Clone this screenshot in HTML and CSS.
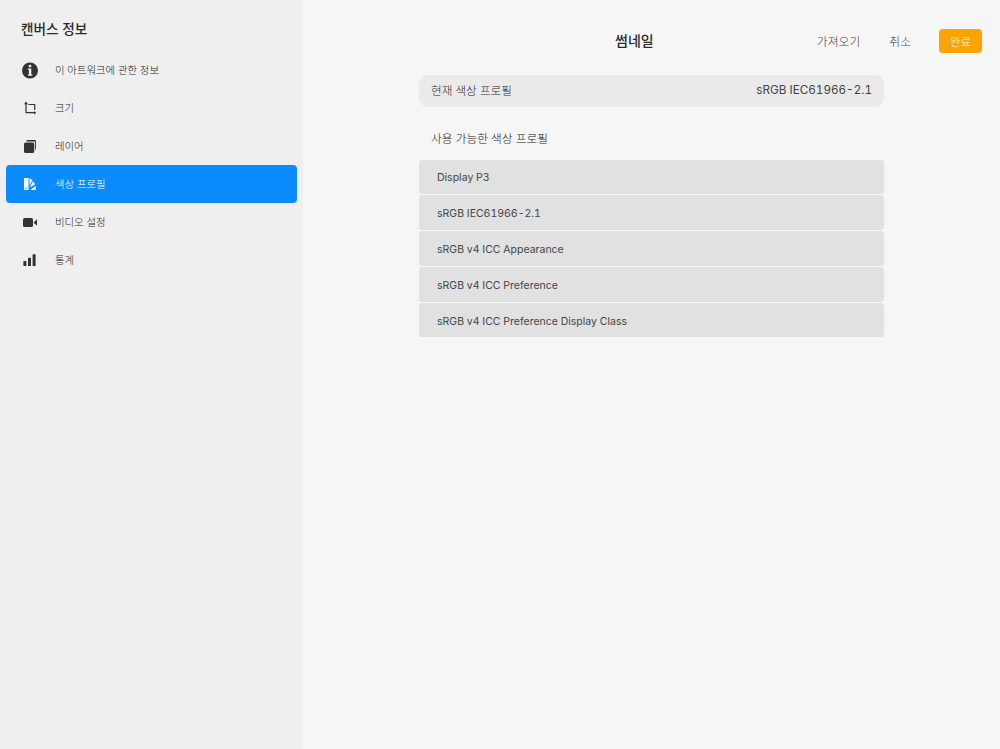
FILE: index.html
```html
<!DOCTYPE html>
<html lang="ko">
<head>
<meta charset="utf-8">
<title>색상 프로필</title>
<link rel="stylesheet" href="styles.css">
</head>
<body>
<div class="app">
  <aside class="sidebar">
    <h2 class="side-title">캔버스 정보</h2>
    <nav class="nav">
      <a class="nav-item"><span class="nav-icon"><svg width="18" height="18" viewBox="0 0 18 18"><path fill-rule="evenodd" d="M9 1.5a8 8 0 1 0 0 16 8 8 0 0 0 0-16zM9 3.7a1.4 1.4 0 1 1 0 2.8 1.4 1.4 0 0 1 0-2.8zM6.9 7.4h3.4v6h1v1.4H6.9v-1.4h1V8.8h-1z"/></svg></span><span class="nav-label">이 아트워크에 관한 정보</span></a>
      <a class="nav-item"><span class="nav-icon"><svg width="18" height="18" viewBox="0 0 18 18"><path fill="none" stroke="currentColor" stroke-width="1.2" d="M5 4.5v9.2h8.5M7.5 5.5h6.2V11"/><path d="M5 2.6l2 2.6H3zM15.2 13.7l-2.2 1.7v-3.4z"/></svg></span><span class="nav-label">크기</span></a>
      <a class="nav-item"><span class="nav-icon"><svg width="18" height="18" viewBox="0 0 18 18"><path d="M6.6 3h7c.8 0 1.4.6 1.4 1.4v7.4c0 .7-.3 1.1-.9 1.2V5.6c0-.8-.5-1.2-1.3-1.2H5.4c0-.9.4-1.4 1.2-1.4z"/><rect x="3" y="5.4" width="10.2" height="10.6" rx="1.6"/></svg></span><span class="nav-label">레이어</span></a>
      <a class="nav-item is-active"><span class="nav-icon"><svg width="18" height="18" viewBox="0 0 18 18"><path d="M3 3h4.5v12H3.8a.8.8 0 0 1-.8-.8zM8.5 3l3 2.2-3 5.4zM8.6 12.4l3.4-6.2 2.2 3zM9.4 15l5.4-4.2V15z"/><circle cx="5" cy="13.2" r=".8" class="hole"/></svg></span><span class="nav-label">색상 프로필</span></a>
      <a class="nav-item"><span class="nav-icon"><svg width="18" height="18" viewBox="0 0 18 18"><rect x="2" y="5" width="10" height="9" rx="1.6"/><path d="M12.5 9.5L16 6.2v6.6z"/></svg></span><span class="nav-label">비디오 설정</span></a>
      <a class="nav-item"><span class="nav-icon"><svg width="18" height="18" viewBox="0 0 18 18"><rect x="2.4" y="10" width="3" height="5" rx=".6"/><rect x="7" y="6.7" width="3" height="8.3" rx=".6"/><rect x="11.6" y="3.3" width="3" height="11.7" rx=".6"/></svg></span><span class="nav-label">통계</span></a>
    </nav>
  </aside>
  <main class="main">
    <header class="topbar">
      <h1 class="page-title">썸네일</h1>
      <div class="actions">
        <button class="btn btn-import">가져오기</button>
        <button class="btn">취소</button>
        <button class="btn btn-done">완료</button>
      </div>
    </header>
    <section class="content">
      <div class="current"><span>현재 색상 프로필</span><span class="current-value">sRGB IEC61966-2.1</span></div>
      <div class="list-label">사용 가능한 색상 프로필</div>
      <ul class="list">
        <li>Display P3</li>
        <li>sRGB IEC61966-2.1</li>
        <li>sRGB v4 ICC Appearance</li>
        <li>sRGB v4 ICC Preference</li>
        <li>sRGB v4 ICC Preference Display Class</li>
      </ul>
    </section>
  </main>
</div>
</body>
</html>
```
FILE: styles.css
```css
* { box-sizing: border-box; }
html, body { margin: 0; height: 100%; }
body {
  font-family: Inter, "Noto Sans CJK KR", sans-serif;
  font-variant-numeric: tabular-nums;
  font-weight: 300;
  color: #222;
  background: #f6f6f6;
}
.app { display: flex; height: 749px; overflow: hidden; }
.sidebar { width: 303px; background: #efefef; padding: 20px 6px 0; flex: none; }
.side-title { margin: 0 0 12px 15px; font-size: 13.6px; line-height: 19px; font-weight: 500; color: #2a2a2a; }
.nav { display: flex; flex-direction: column; width: 291px; }
.nav-item { display: flex; align-items: center; height: 38px; font-size: 10.4px; color: #222; border-radius: 4px; padding-left: 15px; gap: 16px; }
.nav-label { margin-top: -2px; }
.nav-icon { width: 18px; height: 18px; display: flex; color: #333; fill: currentColor; }
.nav-icon svg { display: block; }
.is-active { background: #0a8cff; color: #fff; }
.is-active .nav-icon { color: #fff; }
.hole { fill: #0a8cff; }
.main { flex: 1; display: flex; flex-direction: column; }
.topbar { height: 75px; position: relative; padding-top: 29px; display: flex; justify-content: flex-end; }
.page-title { position: absolute; left: 312px; top: 31px; margin: 0; font-size: 14px; line-height: 20px; font-weight: 500; color: #2a2a2a; }
.actions { display: flex; align-items: center; height: 24px; margin-right: 18px; }
.btn { border: 0; background: none; padding: 0 0 2px; font: inherit; font-size: 11.8px; color: #444; height: 24px; margin-left: 28px; }
.btn-import { margin-right: 1px; }
.btn-done { width: 43px; padding: 0; background: #ffa300; color: #fff; border-radius: 4px; font-size: 11.5px; }
.content { width: 465px; margin-left: 116px; }
.current { display: flex; justify-content: space-between; align-items: center; height: 32px; padding: 0 12px 2px; background: #eaeaea; border-radius: 9px; font-size: 11.6px; color: #2a2a2a; }
.current-value { font-size: 11.7px; font-weight: 400; color: #444; }
.list-label { height: 52.5px; padding: 8px 12px 0; display: flex; align-items: center; font-size: 11.7px; color: #222; }
.list { list-style: none; margin: 0; padding: 0; display: flex; flex-direction: column; gap: 1px; }
.list li { height: 34.8px; display: flex; align-items: center; padding: 2px 0 0 18px; background: #e1e1e1; border-radius: 3px; font-size: 10.5px; font-weight: 400; color: #444; }
```
